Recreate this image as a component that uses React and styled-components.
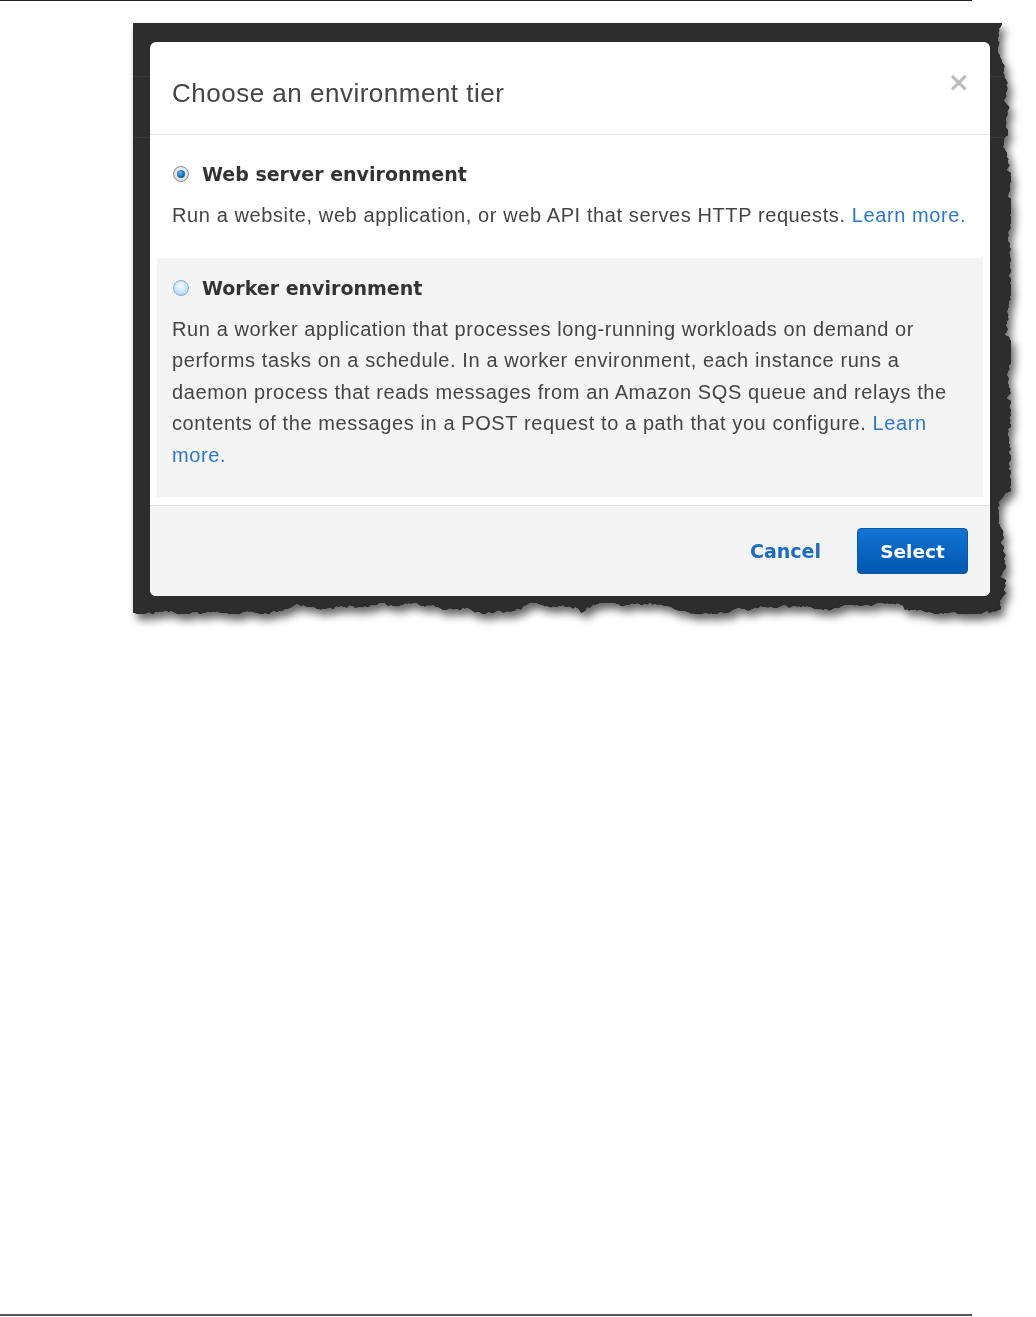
// 환경 티어 선택 모달 스크린샷 (문서 페이지 안의 찢어진 가장자리 그림)
import React from "react";
import styled, { createGlobalStyle } from "styled-components";

const GlobalStyle = createGlobalStyle`
  body {
    margin: 0;
    background: #fff;
    font-family: "Liberation Sans", Arial, sans-serif;
  }
`;

// 찢어진 가장자리: 오른쪽과 아래쪽만 들쭉날쭉
function makeRandom(seed) {
  let s = seed;
  return () => {
    s = (s * 16807) % 2147483647;
    return (s - 1) / 2147483646;
  };
}

const FRAME_W = 884;
const FRAME_H = 600;

function tornEdge() {
  const rnd = makeRandom(23);
  const pts = ["0px 0px"];
  let x = 871;
  for (let y = 0; y <= 584; y += 2) {
    x += (rnd() - 0.5) * 4;
    if (rnd() > 0.9) x += (rnd() - 0.5) * 8;
    x = Math.min(878, Math.max(865, x));
    pts.push(`${x.toFixed(1)}px ${y}px`);
  }
  let y = 586;
  for (let px = Math.round(x); px >= 0; px -= 2) {
    y += (rnd() - 0.5) * 3;
    if (rnd() > 0.92) y += (rnd() - 0.5) * 8;
    y = Math.min(591, Math.max(580, y));
    pts.push(`${px}px ${y.toFixed(1)}px`);
  }
  pts.push(`0px ${y.toFixed(1)}px`);
  return pts.join(", ");
}

const EDGE = tornEdge();

const Page = styled.div`
  width: 972px;
  min-height: 1317px;
  display: flex;
  flex-direction: column;
`;

const TopRule = styled.div`
  height: 1px;
  background: #222;
`;

const BottomRule = styled.div`
  margin-top: auto;
  margin-bottom: 1px;
  height: 2px;
  background: #555;
`;

const Figure = styled.div`
  margin: 22px 0 0 133px;
  width: ${FRAME_W}px;
  filter: drop-shadow(0 0 0.7px #000) drop-shadow(4px 6px 4px rgba(0, 0, 0, 0.6));
`;

const Backdrop = styled.div`
  box-sizing: border-box;
  width: ${FRAME_W}px;
  height: ${FRAME_H}px;
  padding: 19px 0 0 17px;
  background:
    linear-gradient(#3b3b3b, #3b3b3b) 0 53px / 100% 1px no-repeat,
    linear-gradient(#393939, #393939) 0 114px / 100% 1px no-repeat,
    #2d2d2d;
  clip-path: polygon(${EDGE});
`;

const Modal = styled.div`
  width: 840px;
  height: 554px;
  background: #fff;
  border-radius: 6px;
  overflow: hidden;
  display: flex;
  flex-direction: column;
`;

const Header = styled.div`
  height: 93px;
  display: flex;
  align-items: center;
  justify-content: space-between;
  padding: 10px 23px 0 22px;
  box-sizing: border-box;
  border-bottom: 1px solid #e6e6e6;
`;

const Title = styled.h3`
  margin: 0;
  font-size: 26px;
  font-weight: normal;
  letter-spacing: 0.5px;
  color: #444;
`;

const Close = styled.span`
  font-family: "DejaVu Sans", sans-serif;
  font-weight: bold;
  font-size: 27px;
  line-height: 24px;
  color: #bdbdbd;
  margin: -23px -3px 0 0;
`;

const Body = styled.div`
  padding: 9px 7px 8px;
  display: flex;
  flex-direction: column;
`;

const Option = styled.div`
  padding: 18px 15px 26px;
  background: ${(props) => (props.$shaded ? "#f4f4f4" : "transparent")};
`;

const OptionLabel = styled.label`
  display: flex;
  align-items: center;
  gap: 13px;
  height: 24px;
  font-family: "DejaVu Sans", Verdana, sans-serif;
  font-weight: bold;
  font-size: 19px;
  color: #333;
`;

const Radio = styled.span`
  position: relative;
  width: 16px;
  height: 16px;
  box-sizing: border-box;
  border-radius: 50%;
  flex: none;
  margin-left: 1px;
  border: 1px solid ${(props) => (props.$checked ? "#8c8c8c" : "#86a9c9")};
  background: ${(props) =>
    props.$checked
      ? "radial-gradient(circle at 50% 40%, #fafafa, #d2d2d2)"
      : "radial-gradient(circle at 50% 35%, #f2faff 0%, #c9e6fb 55%, #9dcdf0 100%)"};
  &::after {
    content: "";
    display: ${(props) => (props.$checked ? "block" : "none")};
    position: absolute;
    left: 3px;
    top: 3px;
    width: 8px;
    height: 8px;
    border-radius: 50%;
    background: radial-gradient(circle at 40% 35%, #5fb6f0, #0a64b4 60%, #063f78);
  }
`;

const Desc = styled.p`
  margin: 14px 0 0;
  font-size: 20px;
  line-height: 31.5px;
  letter-spacing: 0.6px;
  color: #444;
`;

const Link = styled.a`
  color: #2a78cf;
  text-decoration: none;
`;

const Footer = styled.div`
  flex: 1;
  display: flex;
  align-items: center;
  justify-content: flex-end;
  gap: 36px;
  padding: 0 22px 0 0;
  background: #f4f4f4;
  border-top: 1px solid #dedede;
`;

const TextButton = styled.button`
  border: none;
  background: none;
  padding: 0;
  font-family: "DejaVu Sans", Verdana, sans-serif;
  font-weight: bold;
  font-size: 19px;
  color: #1d6cc4;
`;

const PrimaryButton = styled.button`
  width: 111px;
  height: 46px;
  border: 1px solid #0b57a6;
  border-radius: 4px;
  background: linear-gradient(#1274d3, #0058b1);
  font-family: "DejaVu Sans", Verdana, sans-serif;
  font-weight: bold;
  font-size: 18.5px;
  color: #fff;
`;

export default function App() {
  return (
    <>
      <GlobalStyle />
      <Page>
        <TopRule />
        <Figure>
          <Backdrop>
            <Modal>
              <Header>
                <Title>Choose an environment tier</Title>
                <Close>×</Close>
              </Header>
              <Body>
                <Option>
                  <OptionLabel>
                    <Radio $checked />
                    Web server environment
                  </OptionLabel>
                  <Desc>
                    Run a website, web application, or web API that serves HTTP requests.{" "}
                    <Link>Learn more.</Link>
                  </Desc>
                </Option>
                <Option $shaded>
                  <OptionLabel>
                    <Radio />
                    Worker environment
                  </OptionLabel>
                  <Desc>
                    Run a worker application that processes long-running workloads on demand or
                    performs tasks on a schedule. In a worker environment, each instance runs a
                    daemon process that reads messages from an Amazon SQS queue and relays the
                    contents of the messages in a POST request to a path that you configure.{" "}
                    <Link>Learn more.</Link>
                  </Desc>
                </Option>
              </Body>
              <Footer>
                <TextButton>Cancel</TextButton>
                <PrimaryButton>Select</PrimaryButton>
              </Footer>
            </Modal>
          </Backdrop>
        </Figure>
        <BottomRule />
      </Page>
    </>
  );
}
